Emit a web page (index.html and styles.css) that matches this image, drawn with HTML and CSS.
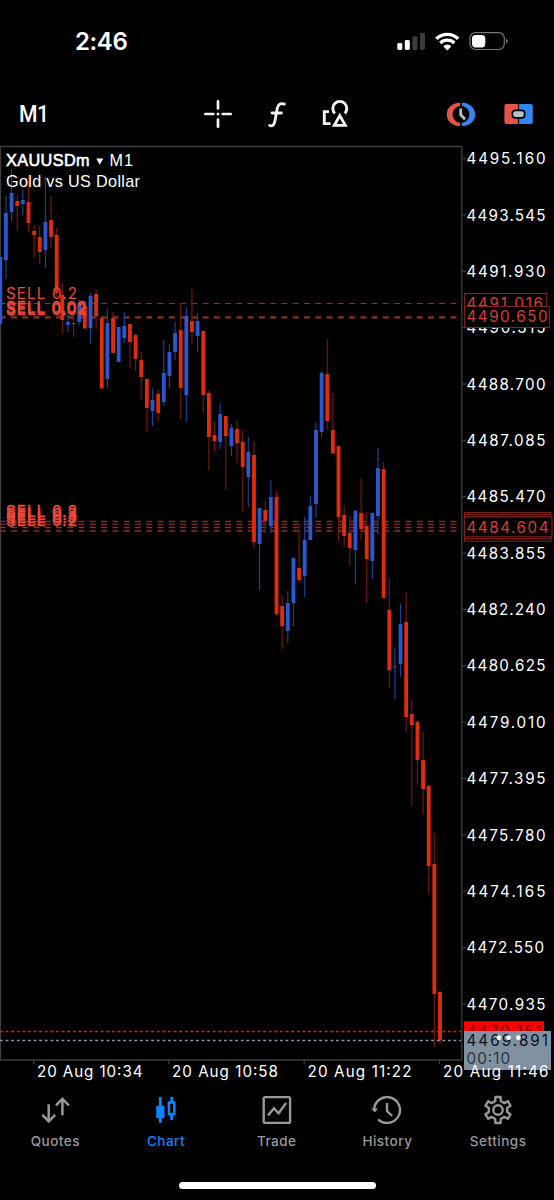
FILE: index.html
```html
<!DOCTYPE html>
<html lang="en">
<head>
<meta charset="utf-8">
<title>XAUUSDm M1</title>
<link rel="stylesheet" href="styles.css">
</head>
<body>
<div class="phone">
  <header class="status">
    <span class="time">2:46</span>
    <svg class="status-icons" viewBox="396 30 114 22" width="114" height="22">
      <rect x="397.3" y="43" width="5" height="7" rx="1.4" fill="#fff"/>
      <rect x="404.8" y="40" width="5" height="10" rx="1.4" fill="#fff"/>
      <rect x="412.4" y="36.2" width="5" height="13.8" rx="1.4" fill="#3c3c3e"/>
      <rect x="420" y="32.7" width="5" height="17.3" rx="1.4" fill="#3c3c3e"/>
      <g fill="none" stroke="#fff" stroke-width="3.3">
        <path d="M436.4 38.8a15.6 15.6 0 0 1 21.8 0"/>
        <path d="M440.3 43a10 10 0 0 1 14 0"/>
      </g>
      <path d="M443.2 46.2q4.1-3.2 8.2 0l-4.1 4.2z" fill="#fff"/>
      <rect x="469.9" y="32.7" width="34.4" height="16.8" rx="5.4" fill="none" stroke="#77777a" stroke-width="1.2"/>
      <rect x="472" y="34.9" width="13.3" height="12.5" rx="3.6" fill="#fff"/>
      <path d="M506 38.4q1.8 1 1.8 2.7t-1.8 2.7z" fill="#77777a"/>
    </svg>
  </header>

  <nav class="toolbar">
    <span class="period">M1</span>
    <div class="tools">
      <svg viewBox="202 98 32 32" width="32" height="32" fill="none" stroke="#f2f2f2" stroke-width="2.7" stroke-linecap="round">
        <path d="M218 101.3v7.2M218 119.5v7.2M205.3 114h8M222.7 114h8"/>
        <circle cx="218" cy="114" r="1.5" fill="#f2f2f2" stroke="none"/>
      </svg>
      <svg viewBox="261 98 32 32" width="32" height="32" fill="none" stroke="#f2f2f2" stroke-width="2.8" stroke-linecap="round" stroke-linejoin="round">
        <path d="M284.4 104.1c-4.4-1.3-6.4.4-7.2 4.5l-2.1 11.6c-.8 4.6-2.2 6.4-5.5 5.3M272 113h9.4"/>
      </svg>
      <svg viewBox="320 98 32 32" width="32" height="32" fill="none" stroke="#f2f2f2" stroke-width="2.9">
        <path d="M334.9 113.4a7 7 0 1 1 9.8 0"/>
        <path d="M339.8 115.6l-5.5 9.8h11z"/>
        <path d="M329 111.6h-4.7v12h6.3"/>
      </svg>
    </div>
    <div class="orders">
      <svg viewBox="445 98 32 32" width="32" height="32">
        <path d="M460.2 102.8c-7.6 0-13.4 4.8-13.4 11.6s5.8 11.6 13.4 11.6v-3.2c-4.4-.6-7.6-4-7.6-8.4s3.200-7.8 7.600-8.400z" fill="#e5544b"/>
        <path d="M461.800 102.800c7.600 0 13.400 4.800 13.400 11.600s-5.800 11.600-13.400 11.600v-3.200c4.400-.6 7.600-4 7.600-8.400s-3.200-7.800-7.600-8.400z" fill="#3585f1"/>
        <path d="M460.700 108.400v6.200l4.300 4.600" fill="none" stroke="#b7c0c6" stroke-width="2.8"/>
      </svg>
      <svg viewBox="503 98 32 32" width="32" height="32">
        <path d="M506.4 104h11.500v20h-11.500a2 2 0 0 1-2-2v-16a2 2 0 0 1 2-2z" fill="#e5544b"/>
        <path d="M519.100 104h11.700a2 2 0 0 1 2 2v16a2 2 0 0 1-2 2h-11.700z" fill="#3585f1"/>
        <rect x="512.400" y="110.300" width="12.200" height="7.600" rx="3" fill="#b7c0c6" stroke="#000" stroke-width="1.700"/>
      </svg>
    </div>
  </nav>

  <main>
    <svg class="chart" viewBox="0 145 554 941" width="554" height="941">
      <g class="frame">
        <path d="M0 146.5H462M461.8 146V1060M0 1060H462M.5 146V1060"/>
        <path id="ticks"/>
      </g>
      <g class="levels">
        <path d="M0 303.5H461" stroke-width="1"/>
        <path d="M0 317.4H461" stroke-width="2.4"/>
        <path d="M0 521.4H461M0 524.2H461M0 527.5H461M0 531H461" stroke-width="1.3"/>
      </g>
      <g id="candles"></g>
      <g class="quotes">
        <path d="M0 1031.4H461" stroke="#f01414"/>
        <path d="M0 1040.5H461" stroke="#8a94a2"/>
      </g>
      <g class="sell">
        <text x="6" y="298.5" textLength="71">SELL 0.2</text>
        <g class="heavy">
          <text x="6" y="313.4" textLength="80.5">SELL 0.02</text>
          <text x="6.3" y="314.6" textLength="80.5">SELL 0.02</text>
          <text x="6" y="516.5" textLength="71">SELL 0.2</text>
          <text x="6" y="519.5" textLength="71">SELL 0.3</text>
          <text x="6" y="522.7" textLength="71">SELL 0.3</text>
          <text x="6" y="526.3" textLength="71">SELL 0.2</text>
        </g>
      </g>
      <g class="title">
        <text class="symbol" x="6" y="166.4" textLength="83.5">XAUUSDm</text>
        <path d="M96.3 158.6h7l-3.5 6.2z" fill="#fff"/>
        <text x="109.5" y="166.4" textLength="23.5">M1</text>
        <text x="6" y="187.2" textLength="134">Gold vs US Dollar</text>
      </g>
      <g class="scale" id="prices"></g>
      <g class="tag">
        <rect x="464.4" y="293.5" width="82.3" height="21"/>
        <text x="466.5" y="309.4" textLength="76.5">4491.016</text>
        <rect x="464.4" y="306.4" width="85" height="21.1"/>
        <text x="466.5" y="321.8" textLength="81">4490.650</text>
        <rect x="464.4" y="512.4" width="86" height="24"/>
        <rect x="464.4" y="514.6" width="86.8" height="26.5"/>
        <rect x="464.4" y="516.8" width="85" height="21.8"/>
        <rect x="464.4" y="517" width="87.6" height="19.8"/>
        <text x="466.5" y="532.5" textLength="82">4484.604</text>
      </g>
      <rect x="464" y="1021.3" width="80" height="20" fill="#f00"/>
      <text class="ask" x="466.5" y="1036.6" textLength="75">4470.151</text>
      <rect x="464" y="1031" width="87" height="39" fill="#8090a1"/>
      <text class="bid" x="466.5" y="1046" textLength="81.5">4469.891</text>
      <text class="countdown" x="466.5" y="1064.4" textLength="43.5">00:10</text>
      <g fill="#fff"><circle cx="498.8" cy="1037.7" r="2.4"/><circle cx="508.6" cy="1037.7" r="2.4"/><circle cx="518.4" cy="1037.7" r="2.4"/></g>
      <g class="scale">
        <text x="37" y="1077.2" textLength="105.5">20 Aug 10:34</text>
        <text x="172" y="1077.2" textLength="106">20 Aug 10:58</text>
        <text x="307.5" y="1077.2" textLength="104">20 Aug 11:22</text>
        <text x="443" y="1077.2" textLength="105.5">20 Aug 11:46</text>
      </g>
    </svg>
  </main>

  <footer class="tabs">
    <a class="tab">
      <svg viewBox="39 1094 32 32" width="32" height="32" stroke-width="2.5"><path d="M48.7 1104.3v17M42.3 1114.8l6.4 6.6 6.4-6.6M62.4 1115.3v-16.5M56 1105.3l6.4-6.6 6.4 6.6"/></svg>
      <span>Quotes</span>
    </a>
    <a class="tab active">
      <svg viewBox="150 1094 32 32" width="32" height="32" stroke-width="2.8"><path d="M160.3 1097v26M171.6 1097v5M171.6 1115v5"/><rect x="156.2" y="1105.8" width="8.2" height="12.4" rx="1" fill="#0a84ff" stroke="none"/><rect x="168.9" y="1102.6" width="5.4" height="11.6" stroke-width="2.5"/></svg>
      <span>Chart</span>
    </a>
    <a class="tab">
      <svg viewBox="261 1094 32 32" width="32" height="32" stroke-width="2.4"><rect x="263.7" y="1097.1" width="26.4" height="25.8" rx="1.5"/><path d="M268 1115.5l6-7.2 4.6 5 7.6-10.3"/></svg>
      <span>Trade</span>
    </a>
    <a class="tab">
      <svg viewBox="371 1094 32 32" width="32" height="32" stroke-width="2.4"><path d="M374.2 1110a12.9 12.9 0 1 1 4 9.3M387 1103v8l5.2 5"/><path d="M371.3 1108.4h6.8l-3.3 4.2z" fill="#98989c" stroke="none"/></svg>
      <span>History</span>
    </a>
    <a class="tab">
      <svg viewBox="482 1094 32 32" width="32" height="32" stroke-width="2.4" stroke-linejoin="round"><path id="gear"/><circle cx="498" cy="1110" r="4.7"/></svg>
      <span>Settings</span>
    </a>
  </footer>
  <div class="home"><i></i></div>
</div>
<script src="chart.js"></script>
</body>
</html>
```
FILE: styles.css
```css
* { box-sizing: border-box; }
body { margin: 0; background: #000; color: #fff; font-family: Inter, Roboto, sans-serif; }
.phone { width: 554px; height: 1200px; display: flex; flex-direction: column; background: #000; overflow: hidden; }

.status { height: 82px; padding: 0 44px 0 75px; display: flex; align-items: center; justify-content: space-between; }
.time { font-size: 24px; font-weight: 600; letter-spacing: -0.4px; }

.toolbar { height: 63px; padding: 0 19px; display: flex; align-items: center; }
.period { width: 183px; font: 500 24px Roboto, sans-serif; letter-spacing: -0.5px; transform: scaleX(0.88); transform-origin: 0 50%; }
.tools { display: flex; gap: 27px; flex: 1; }
.orders { display: flex; gap: 26px; }
.toolbar svg { display: block; }

.chart { display: block; font-size: 15.2px; }
.chart text { white-space: pre; }
.frame { fill: none; stroke: #3d3d3d; stroke-width: 1.3; }
.levels { fill: none; stroke: #88302c; stroke-dasharray: 6 5.27; stroke-dashoffset: 0.3; }
.quotes { fill: none; stroke-width: 1.5; stroke-dasharray: 2.8 2.8; }
.up { fill: #2b58cf; stroke: #1c3f98; }
.down { fill: #e12c0b; stroke: #71190c; }
.body { stroke: none; }
.wick { fill: none; stroke-width: 1.2; }
.sell { fill: #e84a3a; }
.heavy { stroke: #e84a3a; stroke-width: 0.5; }
.title { fill: #fff; font: 16.2px "Liberation Sans", Arial, sans-serif; }
.symbol { stroke: #fff; stroke-width: 0.6; }
.scale { fill: #fff; }
.tag rect { fill: #000; stroke: #842620; stroke-width: 1; }
.tag text { fill: #dc3c32; }
.ask { fill: #650000; }
.bid { fill: #07101c; }
.countdown { fill: #2a3542; }

.tabs { height: 84px; padding-top: 8px; display: grid; grid-template-columns: repeat(5, 110.7px); }
.tab { display: flex; flex-direction: column; align-items: center; gap: 7px; color: #98989c; font-size: 13.5px; font-weight: 500; line-height: 17px; letter-spacing: 0.5px; }
.tab svg { fill: none; stroke: currentColor; }
.tab.active { color: #0a84ff; }
.home { height: 30px; display: flex; justify-content: center; padding-top: 11.5px; }
.home i { width: 197px; height: 7.5px; border-radius: 4px; background: #fff; }
```
FILE: chart.js
```js
// Each candle: direction (1 = up), high, body top, body bottom, low, in plot units.
const candles = [
  [1,257,257,324,324],[1,196,213,260,279],[1,169,193,212,221],[0,195,201,206,230],[1,190,200,204,215],
  [0,175,202,223,232],[0,225,231,235,258],[0,226,237,252,264],[1,177,222,250,268],[0,196,220,237,248],
  [0,228,235,293,297],[0,283,295,320,334],[1,305,322,325,332],[0,310,323,324,337],[1,300,303,322,325],
  [0,302,306,328.5,328.5],[1,293,296,328,344],[0,290,294,316,329],[0,317,318,388.5,388.5],[1,309,323,379,388],
  [0,312,318,353,353],[1,327,327,362,362],[1,312,326,338,343],[0,324,324,342,368],[0,334,335,359,371],
  [0,352,360,377,400],[0,379,379,408,432],[1,388,400,411,426],[0,389,394,413,421],[1,340,373,402,406],
  [1,344,352,376,388],[1,322,333,352,360],[0,303,330,388,419],[1,307,316,395,422],[0,289,321,332,344],
  [1,313,321,336,352],[0,331,331,395,413],[0,390,393,437,470],[0,422,435,441,452],[1,403,414,442,449],
  [0,416,416,436,490],[1,424,428,446,456],[0,421,429,443,463],[0,430,442,467,512],[1,437,452,477,507],
  [0,441,455,542,548],[1,508,508,544,590],[0,501,510,521,534],[1,480,497,526,533],[0,491,497,614,616],
  [0,595,606,626,649],[1,591,603,631,643],[1,558,558,603,626],[0,523,568,580,583],[1,517,540,576,597],
  [1,496,506,540,540],[1,422.5,430,504,518],[1,371,373,432,437],[0,339,374,421,430],[0,393,430,453.5,453.5],
  [0,446,446,517,542],[0,506,515,536,547],[0,516,533,548,565],[1,510,511,550,584],[0,478,513,529,539],
  [0,512,526,559,603],[1,513,513,561,579],[1,448,468,516,534],[0,462,469,598,598],[0,578,610,670,688],
  [1,647,666.6,667.6,699],[1,604,624,664,677],[0,592,622,717,732],[0,700,714,725,805],[0,720,722,760,784],
  [0,732,760,789,814],[0,783,786,866,894],[0,833,864,994,1047],[0,990,992,1040.5,1044]
];
const NS = 'http://www.w3.org/2000/svg';
function add(parent, name, attrs) {
  const el = document.createElementNS(NS, name);
  for (const key in attrs) el.setAttribute(key, attrs[key]);
  parent.appendChild(el);
  return el;
}
const plot = document.getElementById('candles');
candles.forEach(([up, high, top, bottom, low], i) => {
  const x = 0.3 + i * 5.637;
  const dir = up ? 'up' : 'down';
  add(plot, 'path', { class: 'wick ' + dir, d: `M${x} ${high}V${low}` });
  add(plot, 'rect', { class: 'body ' + dir, x: x - 1.9, y: top, width: 3.8, height: bottom - top });
});

// Price scale and tick marks
const prices = document.getElementById('prices');
let ticks = '';
for (let i = 0; i < 16; i++) {
  const y = 158.6 + i * 56.35;
  ticks += `M462 ${y}h4`;
  add(prices, 'text', { x: 466.5, y: y + 5.7, textLength: i === 14 ? 77.5 : 79 })
    .textContent = (4495.160 - i * 1.615).toFixed(3);
}
[33.7, 169, 304.2, 439.5].forEach(x => { ticks += `M${x} 1060v4`; });
document.getElementById('ticks').setAttribute('d', ticks);

// Gear outline with six teeth
let gear = '';
for (let i = 0; i < 6; i++) {
  [[-0.3, 9.4], [-0.2, 13.2], [0.2, 13.2], [0.3, 9.4]].forEach(([offset, r]) => {
    const a = i * Math.PI / 3 + offset;
    gear += (gear ? 'L' : 'M') + (498 + r * Math.sin(a)).toFixed(2) + ' ' + (1110 - r * Math.cos(a)).toFixed(2);
  });
}
document.getElementById('gear').setAttribute('d', gear + 'z');
```
